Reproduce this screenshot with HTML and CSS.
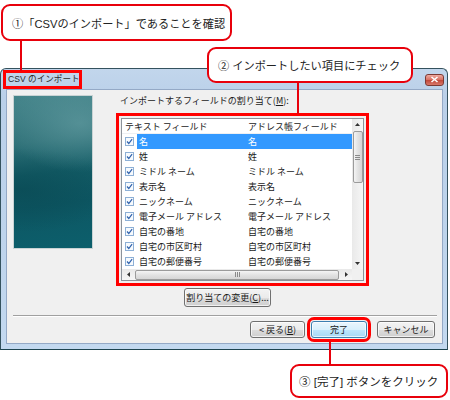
FILE: index.html
```html
<!DOCTYPE html>
<html lang="ja">
<head>
<meta charset="utf-8">
<link rel="stylesheet" href="styles.css">
</head>
<body>
<div class="canvas">
  <div class="window">
    <div class="titlebar">
      <span class="title">CSV のインポート</span>
      <span class="close"><svg width="9" height="7" viewBox="0 0 9 7"><path d="M1.5 1 L7.5 6 M7.5 1 L1.5 6" stroke="#fff" stroke-width="1.6"/></svg></span>
    </div>
    <div class="client">
      <div class="main">
        <div class="banner"></div>
        <div class="content">
          <div class="label">インポートするフィールドの割り当て(<u>M</u>):</div>
          <div class="hl-list">
            <div class="list">
              <div class="rows">
                <div class="header"><span class="h1">テキスト フィールド</span><span class="h2">アドレス帳フィールド</span></div>
                <div class="row sel"><span class="cb"><svg viewBox="0 0 9 9"><rect x="0.5" y="0.5" width="8" height="8" fill="#f7fafd" stroke="#8eb0d6"/><path d="M2 4.5 L3.8 6.5 L7.1 2.2" fill="none" stroke="#2f62ad" stroke-width="1.2"/></svg></span><span class="cells"><span class="c1">名</span><span class="c2">名</span></span></div>
                <div class="row"><span class="cb"><svg viewBox="0 0 9 9"><rect x="0.5" y="0.5" width="8" height="8" fill="#f7fafd" stroke="#8eb0d6"/><path d="M2 4.5 L3.8 6.5 L7.1 2.2" fill="none" stroke="#2f62ad" stroke-width="1.2"/></svg></span><span class="cells"><span class="c1">姓</span><span class="c2">姓</span></span></div>
                <div class="row"><span class="cb"><svg viewBox="0 0 9 9"><rect x="0.5" y="0.5" width="8" height="8" fill="#f7fafd" stroke="#8eb0d6"/><path d="M2 4.5 L3.8 6.5 L7.1 2.2" fill="none" stroke="#2f62ad" stroke-width="1.2"/></svg></span><span class="cells"><span class="c1">ミドル ネーム</span><span class="c2">ミドル ネーム</span></span></div>
                <div class="row"><span class="cb"><svg viewBox="0 0 9 9"><rect x="0.5" y="0.5" width="8" height="8" fill="#f7fafd" stroke="#8eb0d6"/><path d="M2 4.5 L3.8 6.5 L7.1 2.2" fill="none" stroke="#2f62ad" stroke-width="1.2"/></svg></span><span class="cells"><span class="c1">表示名</span><span class="c2">表示名</span></span></div>
                <div class="row"><span class="cb"><svg viewBox="0 0 9 9"><rect x="0.5" y="0.5" width="8" height="8" fill="#f7fafd" stroke="#8eb0d6"/><path d="M2 4.5 L3.8 6.5 L7.1 2.2" fill="none" stroke="#2f62ad" stroke-width="1.2"/></svg></span><span class="cells"><span class="c1">ニックネーム</span><span class="c2">ニックネーム</span></span></div>
                <div class="row"><span class="cb"><svg viewBox="0 0 9 9"><rect x="0.5" y="0.5" width="8" height="8" fill="#f7fafd" stroke="#8eb0d6"/><path d="M2 4.5 L3.8 6.5 L7.1 2.2" fill="none" stroke="#2f62ad" stroke-width="1.2"/></svg></span><span class="cells"><span class="c1">電子メール アドレス</span><span class="c2">電子メール アドレス</span></span></div>
                <div class="row"><span class="cb"><svg viewBox="0 0 9 9"><rect x="0.5" y="0.5" width="8" height="8" fill="#f7fafd" stroke="#8eb0d6"/><path d="M2 4.5 L3.8 6.5 L7.1 2.2" fill="none" stroke="#2f62ad" stroke-width="1.2"/></svg></span><span class="cells"><span class="c1">自宅の番地</span><span class="c2">自宅の番地</span></span></div>
                <div class="row"><span class="cb"><svg viewBox="0 0 9 9"><rect x="0.5" y="0.5" width="8" height="8" fill="#f7fafd" stroke="#8eb0d6"/><path d="M2 4.5 L3.8 6.5 L7.1 2.2" fill="none" stroke="#2f62ad" stroke-width="1.2"/></svg></span><span class="cells"><span class="c1">自宅の市区町村</span><span class="c2">自宅の市区町村</span></span></div>
                <div class="row"><span class="cb"><svg viewBox="0 0 9 9"><rect x="0.5" y="0.5" width="8" height="8" fill="#f7fafd" stroke="#8eb0d6"/><path d="M2 4.5 L3.8 6.5 L7.1 2.2" fill="none" stroke="#2f62ad" stroke-width="1.2"/></svg></span><span class="cells"><span class="c1">自宅の郵便番号</span><span class="c2">自宅の郵便番号</span></span></div>
              </div>
              <div class="vscroll">
                <span class="arrow"><svg width="5" height="3" viewBox="0 0 5 3"><path d="M0 3 L2.5 0 L5 3 Z" fill="#333"/></svg></span>
                <span class="vthumb"><svg width="5" height="5" viewBox="0 0 5 5"><path d="M0 0.5 H5 M0 2.5 H5 M0 4.5 H5" stroke="#8a8a8a"/></svg></span>
                <span class="vtrack"></span>
                <span class="arrow"><svg width="5" height="3" viewBox="0 0 5 3"><path d="M0 0 L2.5 3 L5 0 Z" fill="#333"/></svg></span>
              </div>
              <div class="hscroll">
                <span class="harrow"><svg width="3" height="5" viewBox="0 0 3 5"><path d="M3 0 L0 2.5 L3 5 Z" fill="#333"/></svg></span>
                <span class="hthumb"><svg width="5" height="5" viewBox="0 0 5 5"><path d="M0.5 0 V5 M2.5 0 V5 M4.5 0 V5" stroke="#8a8a8a"/></svg></span>
                <span class="harrow"><svg width="3" height="5" viewBox="0 0 3 5"><path d="M0 0 L3 2.5 L0 5 Z" fill="#333"/></svg></span>
              </div>
              <div class="corner"></div>
            </div>
          </div>
          <div class="change-row"><span class="btn change">割り当ての変更(<u>C</u>)...</span></div>
        </div>
      </div>
      <div class="sep"></div>
      <div class="buttons">
        <span class="btn back">&lt; 戻る(<u>B</u>)</span>
        <span class="btn finish">完了</span>
        <span class="btn cancel">キャンセル</span>
      </div>
    </div>
  </div>

  <div class="callout c-one">①「CSVのインポート」であることを確認</div>
  <div class="line l-one"></div>
  <div class="callout c-two">② インポートしたい項目にチェック</div>
  <div class="line l-two"></div>
  <div class="line l-three"></div>
  <div class="callout c-three">③ [完了] ボタンをクリック</div>
</div>
</body>
</html>
```

FILE: styles.css
```css
* { box-sizing: border-box; }
html, body { margin: 0; padding: 0; background: #fff; }
body { font-family: "Liberation Sans", "Noto Sans CJK JP", sans-serif; }

.canvas {
  position: relative;
  width: 450px;
  height: 400px;
  overflow: hidden;
  padding-top: 68px;
}

.window {
  width: 448px;
  height: 282px;
  border: 1px solid #34525e;
  border-bottom-color: #1d4450;
  border-radius: 6px 6px 0 0;
  background: linear-gradient(to bottom, #c2d6ec 0%, #bad0e9 10%, #bed4ec 60%, #c3d9f0 100%);
  padding: 0 4px 4px 5px;
  display: flex;
  flex-direction: column;
}

.titlebar {
  height: 20px;
  display: flex;
  align-items: center;
  justify-content: space-between;
}

.title {
  margin-left: -3px;
  margin-top: 1px;
  width: 79px;
  height: 19px;
  border: 3px solid #f00;
  padding-left: 2px;
  font-size: 8.6px;
  line-height: 13px;
  color: #2a2a2a;
  white-space: nowrap;
  font-family: "Liberation Sans", "Noto Sans CJK JP", sans-serif;
}

.close {
  width: 19px;
  height: 12px;
  margin-right: -1px;
  margin-top: 1px;
  border: 1px solid #7c3a34;
  border-radius: 3px;
  background: linear-gradient(to bottom, #eeaaa0 0%, #d97466 45%, #c24a3c 55%, #d8786a 100%);
  display: flex;
  align-items: center;
  justify-content: center;
}
.close svg { display: block; }

.client {
  height: 255px;
  background: #f0f0f0;
  border: 1px solid #94a9c6;
  display: flex;
  flex-direction: column;
  font-size: 9px;
  color: #1a1a1a;
  font-family: "Noto Sans CJK JP", sans-serif;
}

.main {
  display: flex;
  padding: 5px 0 0 6px;
}

.banner {
  width: 80px;
  height: 154px;
  border: 1px solid #c9d3d4;
  background:
    radial-gradient(ellipse 110px 70px at 85% 18%, rgba(110,165,170,0.55), rgba(110,165,170,0) 70%),
    radial-gradient(ellipse 140px 60px at 10% 62%, rgba(8,70,80,0.6), rgba(8,70,80,0) 70%),
    linear-gradient(172deg, #44848a 0%, #2f7178 30%, #135c66 50%, #0d5763 70%, #0c5f6c 100%);
}

.content {
  margin-left: 23px;
  width: 253px;
  display: flex;
  flex-direction: column;
}

.label {
  height: 12px;
  line-height: 12px;
  padding-left: 4px;
  margin-bottom: 6px;
  white-space: nowrap;
}

.hl-list {
  border: 3px solid #f00;
  padding: 2px;
}

.list {
  height: 163px;
  border: 1px solid #8c929a;
  background: #fff;
  display: grid;
  grid-template-columns: 1fr 11px;
  grid-template-rows: 150px 11px;
}

.rows { overflow: hidden; }

.header {
  height: 15px;
  display: flex;
  align-items: center;
  border-bottom: 1px solid #eef0f3;
  white-space: nowrap;
}
.h1 { width: 126px; padding-left: 3px; }

.row {
  height: 15px;
  display: flex;
  align-items: center;
  white-space: nowrap;
}
.cb { width: 15px; padding-left: 3px; display: flex; align-items: center; }
.cb svg { display: block; width: 9px; height: 9px; }
.cells {
  flex: 1;
  height: 15px;
  display: flex;
  align-items: center;
}
.c1 { width: 111px; padding-left: 2px; }
.row.sel .cells { background: #3399ff; color: #fff; }

.vscroll {
  grid-row: 1;
  grid-column: 2;
  background: linear-gradient(to right, #e9e9e9, #f6f6f6);
  display: flex;
  flex-direction: column;
  align-items: center;
}
.arrow {
  width: 11px;
  height: 11px;
  display: flex;
  align-items: center;
  justify-content: center;
}
.arrow svg, .harrow svg { display: block; }
.vthumb {
  width: 10px;
  height: 52px;
  margin-top: 1px;
  border: 1px solid #9b9b9b;
  border-radius: 2px;
  background: linear-gradient(to right, #f4f4f4, #e2e2e2 50%, #d6d6d6);
  display: flex;
  align-items: center;
  justify-content: center;
}
.vtrack { flex: 1; }

.hscroll {
  grid-row: 2;
  grid-column: 1;
  background: linear-gradient(to bottom, #e9e9e9, #f6f6f6);
  display: flex;
  align-items: center;
}
.harrow {
  width: 12px;
  height: 11px;
  display: flex;
  align-items: center;
  justify-content: center;
}
.hthumb {
  flex: 1;
  height: 10px;
  margin: 0 1px;
  border: 1px solid #9b9b9b;
  border-radius: 2px;
  background: linear-gradient(to bottom, #f4f4f4, #e2e2e2 50%, #d6d6d6);
  display: flex;
  align-items: center;
  justify-content: center;
}
.corner { grid-row: 2; grid-column: 2; background: #f0f0f0; }

.btn {
  display: flex;
  align-items: center;
  justify-content: center;
  border: 1px solid #707070;
  border-radius: 3px;
  background: linear-gradient(to bottom, #f3f3f3 0%, #ebebeb 50%, #dddddd 51%, #cfcfcf 100%);
  box-shadow: inset 0 0 0 1px rgba(255,255,255,0.7);
  white-space: nowrap;
  font-size: 9px;
  color: #1a1a1a;
}

.change-row { padding-left: 68px; margin-top: 2px; }
.change { width: 87px; height: 19px; }

.sep {
  margin: 8px 5px 0 6px;
  border-top: 1px solid #a0a0a0;
  border-bottom: 1px solid #fff;
}

.buttons {
  display: flex;
  justify-content: flex-end;
  padding-right: 7px;
  margin-top: 4px;
}
.back { width: 55px; height: 17px; }
.finish {
  width: 56px;
  height: 17px;
  margin-left: 6px;
  border-color: #3c7fb1;
  background: linear-gradient(to bottom, #eaf6fd 0%, #d9f0fc 50%, #bee6fd 51%, #a7d9f5 100%);
  outline: 3px solid #f00;
  outline-offset: 1px;
}
.cancel { width: 58px; height: 17px; margin-left: 10px; }

.callout {
  position: absolute;
  background: #fff;
  border: 2px solid #e8000b;
  border-radius: 9px;
  display: flex;
  align-items: center;
  color: #222;
  white-space: nowrap;
  font-family: "Liberation Sans", "Noto Sans CJK JP", sans-serif;
}
.c-one { left: 1px; top: 4px; width: 231px; height: 37px; padding-left: 9px; font-size: 11.2px; }
.c-two { left: 207px; top: 47px; width: 206px; height: 36px; padding-left: 9px; font-size: 11.2px; }
.c-three { left: 290px; top: 364px; width: 158px; height: 34px; padding-left: 7px; font-size: 11.5px; }

.line { position: absolute; width: 2px; background: #e8000b; }
.l-one { left: 20px; top: 41px; height: 30px; }
.l-two { left: 297px; top: 83px; height: 31px; }
.l-three { left: 329px; top: 341px; height: 24px; }
```
